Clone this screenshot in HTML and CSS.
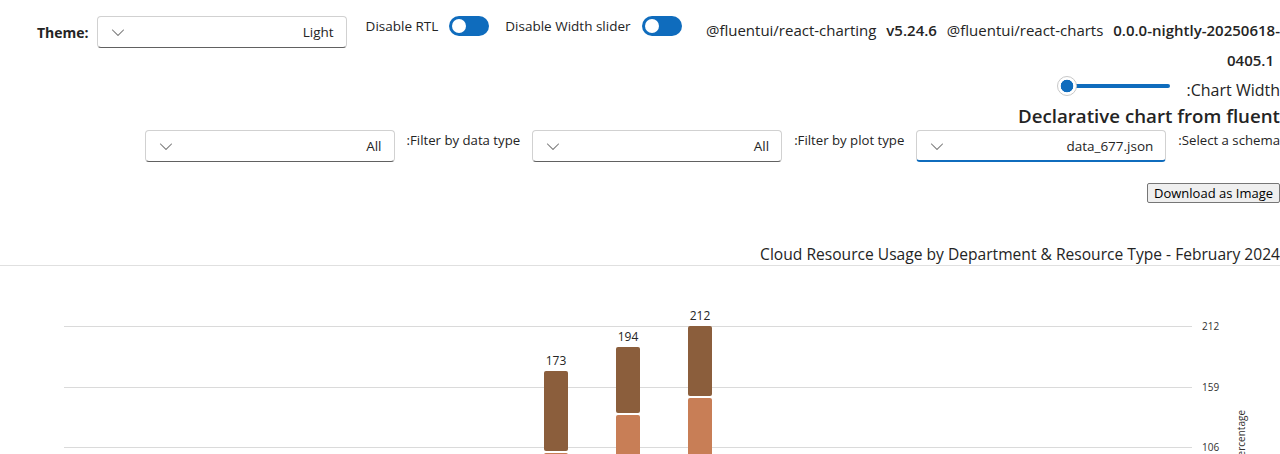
FILE: index.html
```html
<!DOCTYPE html>
<html lang="en">
<head>
<meta charset="utf-8">
<title>Declarative chart</title>
<link rel="stylesheet" href="styles.css">
</head>
<body>
<div class="top-row">
  <div class="theme-field">
    <span class="theme-label">Theme:</span>
    <div class="dropdown">
      <svg class="chevron" width="20" height="20" viewBox="0 0 20 20"><path d="M15.85 7.65c.2.2.2.5 0 .7l-5.46 5.49a.55.55 0 0 1-.78 0L4.15 8.35a.5.5 0 1 1 .7-.7L10 12.8l5.15-5.16c.2-.2.5-.2.7 0Z"/></svg>
      <span class="dd-value">Light</span>
    </div>
  </div>
  <div class="switch-field">
    <span>Disable RTL</span>
    <span class="switch"><span class="knob"></span></span>
  </div>
  <div class="switch-field second">
    <span>Disable Width slider</span>
    <span class="switch"><span class="knob"></span></span>
  </div>
  <div class="versions">
    <span class="pkg">@fluentui/react-charting</span> <b class="ver">v5.24.6</b> <span class="pkg">@fluentui/react-charts</span> <b class="ver">0.0.0-nightly-20250618-0405.1</b>
  </div>
</div>

<div class="main" dir="rtl">
  <div class="slider-row">
    <span class="slider-label">Chart Width:</span>
    <div class="slider">
      <div class="slider-track"></div>
      <span class="slider-thumb"></span>
    </div>
  </div>
  <h2 class="heading">Declarative chart from fluent</h2>
  <div class="filters">
    <span class="filter-label">Select a schema:</span>
    <div class="dropdown active">
      <svg class="chevron" width="20" height="20" viewBox="0 0 20 20"><path d="M15.85 7.65c.2.2.2.5 0 .7l-5.46 5.49a.55.55 0 0 1-.78 0L4.15 8.35a.5.5 0 1 1 .7-.7L10 12.8l5.15-5.16c.2-.2.5-.2.7 0Z"/></svg>
      <span class="dd-value">data_677.json</span>
    </div>
    <span class="filter-label">Filter by plot type:</span>
    <div class="dropdown">
      <svg class="chevron" width="20" height="20" viewBox="0 0 20 20"><path d="M15.85 7.65c.2.2.2.5 0 .7l-5.46 5.49a.55.55 0 0 1-.78 0L4.15 8.35a.5.5 0 1 1 .7-.7L10 12.8l5.15-5.16c.2-.2.5-.2.7 0Z"/></svg>
      <span class="dd-value">All</span>
    </div>
    <span class="filter-label">Filter by data type:</span>
    <div class="dropdown">
      <svg class="chevron" width="20" height="20" viewBox="0 0 20 20"><path d="M15.85 7.65c.2.2.2.5 0 .7l-5.46 5.49a.55.55 0 0 1-.78 0L4.15 8.35a.5.5 0 1 1 .7-.7L10 12.8l5.15-5.16c.2-.2.5-.2.7 0Z"/></svg>
      <span class="dd-value">All</span>
    </div>
  </div>
  <div class="actions">
    <button class="download-btn" type="button">Download as Image</button>
  </div>
</div>

<div class="chart-title">Cloud Resource Usage by Department &amp; Resource Type - February 2024</div>
<div class="chart">
  <svg class="chart-svg" width="1280" height="188" viewBox="0 0 1280 188">
    <g class="grid">
      <line x1="64" x2="1192" y1="60.5" y2="60.5"/>
      <line x1="64" x2="1192" y1="121.5" y2="121.5"/>
      <line x1="64" x2="1192" y1="181.5" y2="181.5"/>
    </g>
    <g class="ticks">
      <text x="1202" y="64">212</text>
      <text x="1202" y="125">159</text>
      <text x="1202" y="185">106</text>
    </g>
    <text class="axis-title" transform="translate(1245 144) rotate(-90)" text-anchor="end">Percentage</text>
    <g class="bars">
      <rect class="seg-dark" x="544" y="105" width="24" height="80" rx="2"/>
      <rect class="seg-light" x="544" y="187" width="24" height="12" rx="2"/>
      <rect class="seg-dark" x="616" y="81" width="24" height="66" rx="2"/>
      <rect class="seg-light" x="616" y="149" width="24" height="50" rx="2"/>
      <rect class="seg-dark" x="688" y="60" width="24" height="70" rx="2"/>
      <rect class="seg-light" x="688" y="132" width="24" height="70" rx="2"/>
    </g>
    <g class="bar-labels">
      <text x="556" y="99">173</text>
      <text x="628" y="75">194</text>
      <text x="700" y="54">212</text>
    </g>
  </svg>
</div>
</body>
</html>
```

FILE: styles.css
```css
* { box-sizing: border-box; }

body {
  margin: 0;
  width: 1280px;
  overflow: hidden;
  font-family: "Open Sans", "Noto Sans", sans-serif;
  font-size: 13.5px;
  color: #242424;
  background: #fff;
}

.top-row {
  display: flex;
  align-items: flex-start;
  height: 76px;
  padding: 16px 0 0 37px;
}

.theme-field {
  display: flex;
  align-items: center;
  gap: 8px;
}

.theme-label {
  font-size: 14px;
  font-weight: 700;
}

.dropdown {
  direction: ltr;
  width: 250px;
  height: 32px;
  flex: none;
  display: flex;
  align-items: center;
  justify-content: space-between;
  padding: 0 12px 0 10px;
  border: 1px solid #d1d1d1;
  border-bottom-color: #616161;
  border-radius: 4px;
  background: #fff;
}

.dropdown.active {
  border-bottom: 2px solid #0f6cbd;
}

.chevron {
  fill: #707070;
  flex: none;
}

.dd-value {
  font-size: 13.5px;
  color: #242424;
}

.switch-field {
  display: flex;
  align-items: center;
  gap: 11px;
  height: 20px;
  margin-left: 19px;
}

.switch-field.second {
  margin-left: 16px;
}

.switch {
  width: 40px;
  height: 20px;
  border-radius: 10px;
  background: #0f6cbd;
  display: flex;
  align-items: center;
  padding-left: 3px;
}

.knob {
  width: 14px;
  height: 14px;
  border-radius: 50%;
  background: #fff;
}

.versions {
  flex: 1;
  margin-left: 16px;
  margin-top: -1px;
  font-size: 15px;
  line-height: 30px;
  text-align: right;
}

.ver {
  font-weight: 600;
  margin: 0 6px;
}

.main {
  direction: rtl;
}

.slider-row {
  display: flex;
  align-items: flex-start;
  gap: 17px;
  height: 24px;
}

.slider-label {
  padding-top: 4px;
  font-size: 16px;
  line-height: 20px;
}

.slider {
  direction: ltr;
  position: relative;
  width: 113px;
  height: 20px;
}

.slider-track {
  margin: 8px 0 0 10px;
  height: 4px;
  border-radius: 2px;
  background: #0f6cbd;
}

.slider-thumb {
  position: absolute;
  left: 0;
  top: 0;
  width: 20px;
  height: 20px;
  border-radius: 50%;
  border: 1px solid #c8c8c8;
  background: radial-gradient(circle, #0f6cbd 0, #0f6cbd 6px, #fff 6.6px);
}

.heading {
  margin: 0;
  height: 30px;
  padding-top: 2px;
  font-size: 18.7px;
  line-height: 28px;
  font-weight: 600;
  color: #242424;
}

.filters {
  display: flex;
  align-items: flex-start;
  gap: 12px;
  height: 32px;
}

.filter-label {
  font-size: 13.2px;
  line-height: 20px;
  white-space: nowrap;
}

.actions {
  display: flex;
  margin-top: 21px;
  height: 20px;
}

.download-btn {
  height: 20px;
  padding: 0 6px;
  font-family: "Open Sans", "Noto Sans", sans-serif;
  font-size: 13px;
  line-height: 18px;
  color: #000;
  background: #efefef;
  border: 1px solid #767676;
  border-radius: 2px;
}

.chart-title {
  margin-top: 40px;
  height: 23px;
  line-height: 22px;
  font-size: 15.6px;
  text-align: right;
  color: #242424;
  border-bottom: 1px solid #e0e0e0;
}

.chart-svg {
  display: block;
  direction: ltr;
}

.grid line {
  stroke: #dadada;
  stroke-width: 1;
}

.ticks text {
  font-size: 10px;
  fill: #323130;
}

.axis-title {
  font-size: 10px;
  fill: #323130;
}

.seg-dark { fill: #8b5e3c; }
.seg-light { fill: #c87e56; }

.bar-labels text {
  font-size: 12px;
  fill: #242424;
  text-anchor: middle;
}
```
